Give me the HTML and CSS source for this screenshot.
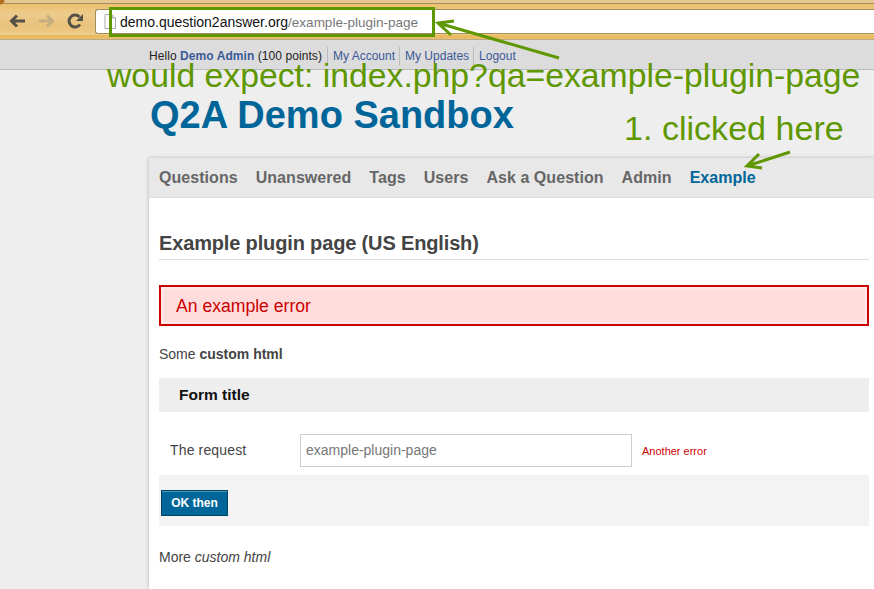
FILE: index.html
```html
<!DOCTYPE html>
<html lang="en">
<head>
    <meta charset="UTF-8">
    <title>Q2A Demo Sandbox</title>
    <link rel="stylesheet" href="styles.css">
</head>
<body>
    <div class="toolbar">
        <svg class="nav-icon" width="20" height="20" viewBox="0 0 20 20"><path d="M18 10H6M10 4.500L4.500 10l5.500 5.500" fill="none" stroke="#565147" stroke-width="3"/></svg>
        <svg class="nav-icon" width="20" height="20" viewBox="0 0 20 20"><path d="M3 10h12M11 4.500l5.500 5.500-5.500 5.500" fill="none" stroke="#c4ae80" stroke-width="3"/></svg>
        <svg class="nav-icon" width="20" height="20" viewBox="0 0 20 20"><path d="M15 13.500A6 6 0 1 1 14.500 6" fill="none" stroke="#565147" stroke-width="3"/><path d="M18 3v7h-7z" fill="#565147"/></svg>
        <div class="omnibox">
            <svg class="page-icon" width="12" height="15" viewBox="0 0 12 15"><path d="M1 .500h7l3.500 3.500v10.500H1z" fill="#fff" stroke="#aaa"/><path d="M8 .500V4h3.500" fill="#ddd" stroke="#aaa"/></svg>
            <span class="url">demo.question2answer.org<span class="url-path">/example-plugin-page</span></span>
        </div>
    </div>

    <div class="userbar">
        <span class="user-hello">Hello <a class="user-name">Demo Admin</a> (100 points)</span>
        <a class="user-link">My Account</a>
        <a class="user-link">My Updates</a>
        <a class="user-link">Logout</a>
    </div>

    <div class="site-title">Q2A Demo Sandbox</div>

    <div class="panel">
        <div class="nav">
            <a>Questions</a>
            <a>Unanswered</a>
            <a>Tags</a>
            <a>Users</a>
            <a>Ask a Question</a>
            <a>Admin</a>
            <a class="selected">Example</a>
        </div>
        <div class="content">
            <h1>Example plugin page (US English)</h1>
            <div class="error">An example error</div>
            <p class="custom">Some <strong>custom html</strong></p>
            <div class="form-title">Form title</div>
            <div class="form-row">
                <label class="form-label">The request</label>
                <input class="form-input" type="text" value="example-plugin-page">
                <span class="form-error">Another error</span>
            </div>
            <div class="form-buttons">
                <button class="form-button">OK then</button>
            </div>
            <p class="custom more">More <em>custom html</em></p>
        </div>
    </div>

    <!-- annotations drawn over the screenshot -->
    <div class="note-box"></div>
    <div class="note note-expect">would expect: index.php?qa=example-plugin-page</div>
    <div class="note note-clicked">1. clicked here</div>
    <svg class="arrows" width="874" height="589" viewBox="0 0 874 589">
        <path d="M559 58L438 23M454 21L438 23 451 35" fill="none" stroke="#5f9700" stroke-width="3"/>
        <path d="M790 152L747 166M759 154L747 166 762 168" fill="none" stroke="#5f9700" stroke-width="3"/>
    </svg>
</body>
</html>
```

FILE: styles.css
```css
body {
    margin: 0;
    height: 589px;
    overflow: hidden;
    position: relative;
    background-color: #eee;
    font-family: "Liberation Sans", Arial, sans-serif;
    color: #444;
}
a {
    text-decoration: none;
}

/* browser toolbar */
.toolbar {
    display: flex;
    align-items: center;
    height: 40px;
    box-sizing: border-box;
    padding: 2px 0 0 7px;
    gap: 9px;
    border-bottom: 1px solid #b9a987;
    background-color: #e9c27a;
    background-image:
        radial-gradient(circle at 0 0, #b5701f 0, #b5701f 4px, transparent 5px),
        linear-gradient(#e6c792 0, #e6c792 3px, #a58e66 3px, #a58e66 4px, #ecc06b 4px, #eccb8c 14px, #e9c27a 26px, #edc883 33px, #f3dcae 34px, #e9b95f 35px, #ebbd68 39px);
}
.omnibox {
    flex: 1;
    align-self: flex-start;
    display: flex;
    align-items: center;
    height: 23px;
    margin: 7px 0 0 1px;
    padding-left: 8px;
    gap: 4px;
    background-color: #fff;
    border: 1px solid #a08d5c;
    border-right: none;
    border-radius: 3px 0 0 3px;
}
.url {
    font-size: 14px;
    color: #111;
}
.url-path {
    font-size: 13.500px;
    color: #777;
}

/* user links */
.userbar {
    display: flex;
    align-items: center;
    padding: 2px 0 0 149px;
    box-sizing: border-box;
    height: 30px;
    background-color: #dcdcdc;
    border-bottom: 1px solid #bbb;
    font-size: 12px;
    color: #222;
}
.user-hello {
    letter-spacing: 0.07px;
}
.user-name {
    font-weight: bold;
    color: #3b5998;
}
.user-link {
    color: #3b5998;
    margin-left: 4px;
    padding-left: 5px;
    border-left: 1px solid #bbb;
    line-height: 18px;
}
.user-link:first-of-type {
    margin-left: 5px;
}

.site-title {
    height: 88px;
    box-sizing: border-box;
    padding: 24px 0 0 150px;
    font-size: 38px;
    font-weight: bold;
    line-height: 42px;
    color: #006699;
}

/* main panel */
.panel {
    margin-left: 149px;
    background-color: #fff;
    box-shadow: 0 0 4px rgba(0, 0, 0, 0.25);
    height: 431px;
}
.nav {
    display: flex;
    gap: 18px;
    align-items: center;
    height: 39px;
    padding-left: 10px;
    background-color: #e8e8e8;
    border-bottom: 1px solid #ddd;
    font-size: 16px;
    font-weight: bold;
    letter-spacing: 0.05px;
    color: #666;
}
.nav .selected {
    color: #006699;
}
.content {
    padding: 0 5px 0 10px;
}
h1 {
    margin: 0;
    padding: 33px 0 3px;
    font-size: 20px;
    letter-spacing: -0.15px;
    line-height: 25px;
    color: #444;
    border-bottom: 1px solid #ddd;
}
.error {
    margin-top: 25px;
    height: 37px;
    line-height: 38px;
    padding-left: 15px;
    background-color: #fdd;
    border: 2px solid #c00;
    box-shadow: inset 0 0 4px #fff;
    font-size: 17.600px;
    color: #c00;
}
.custom {
    margin: 0;
    font-size: 14px;
    line-height: 18px;
}
.error + .custom {
    margin-top: 19px;
}
.form-title {
    margin-top: 15px;
    height: 34px;
    line-height: 33px;
    padding-left: 20px;
    background-color: #eee;
    font-size: 15.500px;
    font-weight: bold;
    color: #111;
}
.form-row {
    display: flex;
    align-items: center;
    height: 63px;
    box-sizing: border-box;
    padding: 14px 0 0 11px;
}
.form-label {
    width: 130px;
    margin-bottom: 2px;
    font-size: 14px;
    letter-spacing: 0.15px;
}
.form-input {
    width: 320px;
    height: 31px;
    padding: 0 5px 2px;
    box-sizing: content-box;
    height: 29px;
    border: 1px solid #ccc;
    font: 14px "Liberation Sans", Arial, sans-serif;
    color: #777;
}
.form-error {
    margin-left: 10px;
    font-size: 11px;
    color: #c00;
}
.form-buttons {
    height: 51px;
    box-sizing: border-box;
    padding: 15px 0 0 2px;
    background-color: #f3f3f3;
}
.form-button {
    display: block;
    width: 67px;
    height: 26px;
    padding: 0;
    background-color: #006699;
    border: 1px solid #004466;
    box-shadow: inset 0 1px #4d94b8;
    font: bold 12px "Liberation Sans", Arial, sans-serif;
    color: #fff;
}
.more {
    margin-top: 22px;
}

/* annotations */
.note-box {
    position: absolute;
    left: 109px;
    top: 7px;
    width: 320px;
    height: 24px;
    border: 3px solid #5f9700;
}
.note {
    position: absolute;
    font-size: 33.750px;
    line-height: 38px;
    color: #5f9700;
    white-space: nowrap;
}
.note-expect {
    left: 107px;
    top: 56px;
}
.note-clicked {
    left: 624px;
    top: 109px;
    font-size: 34.100px;
}
.arrows {
    position: absolute;
    left: 0;
    top: 0;
}
```
